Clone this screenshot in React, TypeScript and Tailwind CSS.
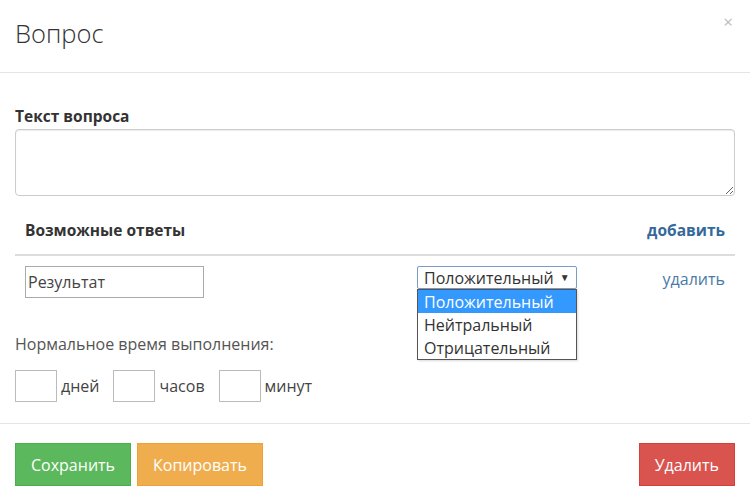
import React from "react";

const font = { fontFamily: '"Open Sans", "Noto Sans", sans-serif' };

function TimeBox({ label }: { label: string }) {
  return (
    <div className="flex items-center gap-[4px]">
      <input className="w-[42px] h-[32px] border border-[#bbb] outline-none" />
      <span className="text-[16px] text-[#444]">{label}</span>
    </div>
  );
}

export default function App() {
  const options = ["Положительный", "Нейтральный", "Отрицательный"];

  return (
    <div className="w-[750px] h-[502px] bg-white text-[#333]" style={font}>
      {/* header */}
      <div className="relative h-[73px] border-b border-[#e5e5e5] px-[15px] flex items-center">
        <h1 className="text-[25.5px] font-light text-[#333] -mt-[6px]">Вопрос</h1>
        <span className="absolute right-[17px] top-[13px] text-[17px] text-[#bbb] leading-none">×</span>
      </div>

      {/* body */}
      <div className="px-[15px] pt-[33px] h-[350px]">
        <div className="text-[15.5px] font-bold leading-[20px] text-[#333]">Текст вопроса</div>
        <textarea className="mt-[3px] block w-full h-[67px] border border-[#ccc] rounded-[4px] shadow-[inset_0_1px_1px_rgba(0,0,0,0.075)] outline-none" />

        <div className="mt-[16px] flex items-center justify-between h-[44px] pb-[4px] px-[10px] border-b-2 border-[#ddd]">
          <span className="text-[15.5px] font-bold">Возможные ответы</span>
          <span className="text-[15.5px] font-bold text-[#36699b]">добавить</span>
        </div>

        <div className="relative flex items-start px-[10px] pt-[10px] h-[60px]">
          <div className="w-[179px] h-[32px] border border-[#aaa] flex items-center px-[2px] text-[16px] text-[#444]">
            Результат
          </div>
          <div className="relative ml-[213px] w-[160px]">
            <div className="h-[23px] border border-[#7a9cc6] rounded-[2px] flex items-center px-[6px] text-[16px] text-[#333]">
              <span>Положительный</span>
              <span className="ml-[6px] text-[10px]">▼</span>
            </div>
            <div className="absolute left-0 top-[23px] w-[160px] border border-[#555] bg-white shadow-[1px_1px_2px_rgba(0,0,0,0.15)] z-10">
              {options.map((o, i) => (
                <div
                  key={o}
                  className={
                    i === 0
                      ? "h-[23px] px-[6px] flex items-center text-[16px] bg-[#3399ff] text-white"
                      : "h-[23px] px-[6px] flex items-center text-[16px] text-[#333]"
                  }
                >
                  {o}
                </div>
              ))}
            </div>
          </div>
          <span className="ml-auto text-[16px] text-[#4a7aa8] mt-[1px]">удалить</span>
        </div>

        <div className="mt-[18px] text-[16px] text-[#555] leading-[20px]">Нормальное время выполнения:</div>
        <div className="mt-[16px] flex items-center gap-[14px]">
          <TimeBox label="дней" />
          <TimeBox label="часов" />
          <TimeBox label="минут" />
        </div>
      </div>

      {/* footer */}
      <div className="border-t border-[#e5e5e5] px-[15px] pt-[19px] flex items-center">
        <button className="h-[43px] px-[15px] bg-[#5cb85c] border border-[#4cae4c] text-white text-[16px]">Сохранить</button>
        <button className="ml-[6px] h-[43px] px-[15px] bg-[#f0ad4e] border border-[#eea236] text-white text-[16px]">Копировать</button>
        <button className="ml-auto h-[43px] px-[15px] bg-[#d9534f] border border-[#d43f3a] text-white text-[16px]">Удалить</button>
      </div>
    </div>
  );
}
